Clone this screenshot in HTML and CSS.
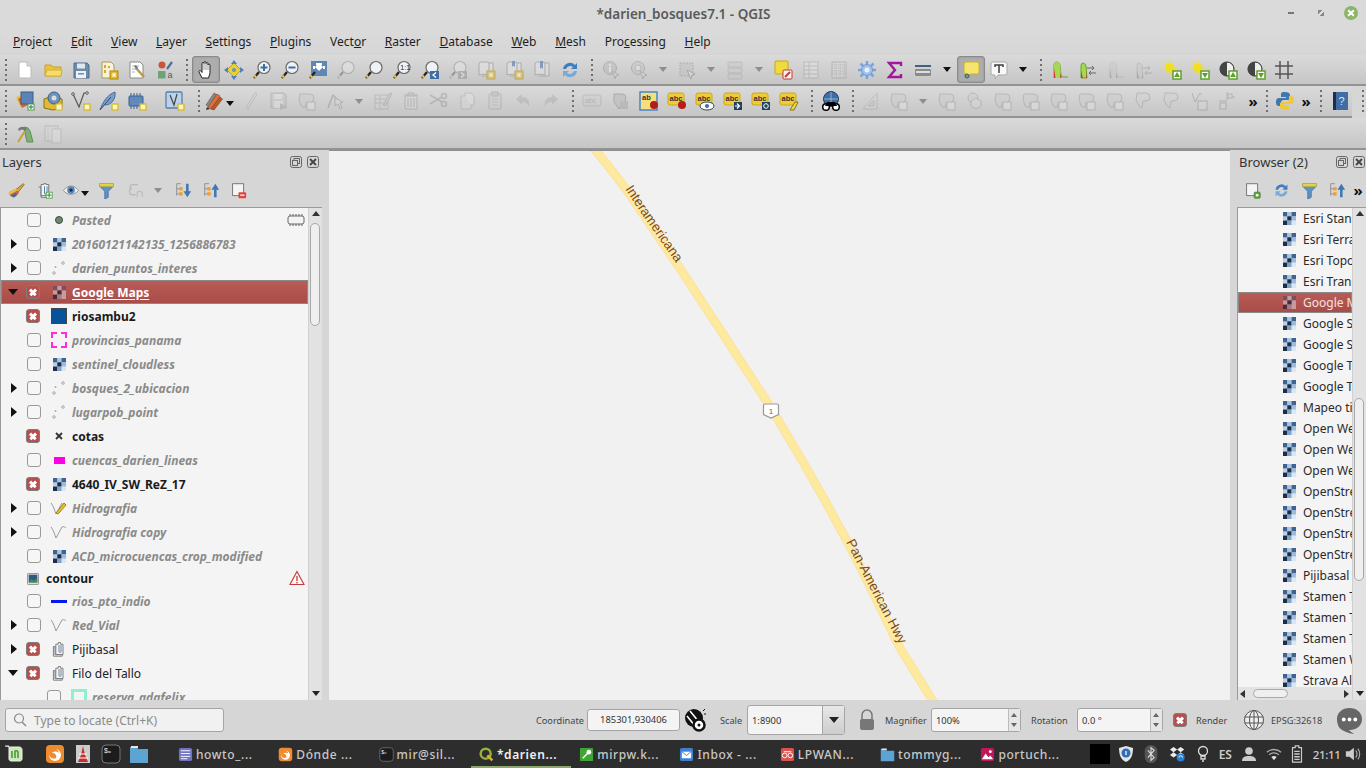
FILE: index.html
```html
<!DOCTYPE html>
<html lang="en">
<head>
<meta charset="utf-8">
<title>*darien_bosques7.1 - QGIS</title>
<link rel="stylesheet" href="styles.css">
</head>
<body>
<svg class="defs" width="0" height="0">
<defs>
<symbol id="new" viewBox="0 0 20 20"><path d="M4 2h8l4 4v12H4z" fill="#fff" stroke="#bbb"/><path d="M12 2v4h4" fill="#ddd" stroke="#bbb"/></symbol>
<symbol id="open" viewBox="0 0 20 20"><path d="M2 16V5h6l2 2h8v9z" fill="#e8c33f" stroke="#c9a227"/><path d="M2 16l2-6h15l-1 6z" fill="#f5dc6b" stroke="#d4b032"/></symbol>
<symbol id="save" viewBox="0 0 20 20"><path d="M3 3h13l2 2v13H3z" fill="#6d8cab" stroke="#4f6d8c"/><rect x="6" y="3.500" width="8" height="5" fill="#dfe7ef"/><rect x="5" y="11" width="10" height="7" fill="#eef2f6"/><rect x="7" y="13" width="6" height="1.500" fill="#6d8cab"/></symbol>
<symbol id="star" viewBox="0 0 20 20"><rect x="11" y="11" width="8" height="8" fill="#e3b81f" stroke="#b08c10"/><path d="M15 12.500v5M12.700 15h4.600M13.300 13.300l3.400 3.400M16.700 13.300l-3.400 3.400" stroke="#fff" stroke-width=".9"/></symbol>
<symbol id="saveas" viewBox="0 0 20 20"><path d="M3 2h9l3 3v13H3z" fill="#f6f1d8" stroke="#a89a5a"/><path d="M5 5h2v3H5zM5 10h2v3H5zM9 6h2v2H9z" fill="#dba82a"/><use href="#star"/></symbol>
<symbol id="props" viewBox="0 0 20 20"><path d="M3 2h10l3 3v13H3z" fill="#fff" stroke="#8a8a8a"/><path d="M5 6h7M5 9h5M5 12h3" stroke="#9db3cb"/><path d="M9 8l8 9" stroke="#b99a4a" stroke-width="2.500"/><path d="M9 5l2 3-2 1-2-3" fill="#777"/></symbol>
<symbol id="styles" viewBox="0 0 20 20"><circle cx="7" cy="5" r="3.500" fill="#c9553a"/><rect x="3" y="11" width="7.500" height="7.500" fill="#6da37a"/><path d="M12 9l5-7" stroke="#4a6f9f" stroke-width="2.200"/><text x="12.500" y="18" class="sv" font-size="9" fill="#555">a</text></symbol>
<symbol id="pan" viewBox="0 0 20 20"><path d="M6 18l-3-6c-.6-1.400 1-2 2-1l1 1.500V3.500c0-1.500 2-1.500 2 0V2.500c0-1.300 2-1.300 2 0v1c0-1.300 2-1.300 2 0v1.500c0-1.200 2-1.200 2 0v8l-1.500 5z" fill="#fff" stroke="#222" stroke-width="1"/><path d="M8 4v6M10 3v7M12 4v6" stroke="#555" stroke-width=".6"/></symbol>
<symbol id="pancenter" viewBox="0 0 20 20"><path d="M10 3l7 7-7 7-7-7z" fill="#e8d03a" stroke="#b9a21c"/><circle cx="10" cy="10" r="2" fill="#6f93b9"/><path d="M10 0l3 4H7zM10 20l3-4H7zM0 10l4-3v6zM20 10l-4-3v6z" fill="#4f82b8"/></symbol>
<symbol id="mag" viewBox="0 0 20 20"><path d="M7 12l-5 6" stroke="#222" stroke-width="2.200"/><path d="M2.500 17.500l1.500-2" stroke="#e8c33f" stroke-width="2.200"/><circle cx="12" cy="7.500" r="6" fill="#eef2f5" stroke="#6a6a6a" stroke-width="1.200"/></symbol>
<symbol id="zoomin" viewBox="0 0 20 20"><use href="#mag"/><path d="M12 4v7M8.500 7.500h7" stroke="#3f6ea5" stroke-width="2"/></symbol>
<symbol id="zoomout" viewBox="0 0 20 20"><use href="#mag"/><path d="M8.500 7.500h7" stroke="#3f6ea5" stroke-width="2"/></symbol>
<symbol id="zoomfull" viewBox="0 0 20 20"><rect x="3" y="1" width="16" height="15" fill="#5f87b3"/><path d="M11 3l4 4-4 4-4-4z" fill="#fff"/><path d="M8 3h6v2H8zM5 6h2v3H5zM15 6h2v3h-2z" fill="#fff"/><path d="M7 12l-5 6" stroke="#222" stroke-width="2.200"/><path d="M2.500 17.500l1.500-2" stroke="#e8c33f" stroke-width="2.200"/></symbol>
<symbol id="zoomlast" viewBox="0 0 20 20"><use href="#mag"/><rect x="10" y="11" width="9" height="8" fill="#3f6ea5"/><path d="M16 12.500L13 15l3 2.500" stroke="#fff" fill="none" stroke-width="1.300"/></symbol>
<symbol id="zoomnext" viewBox="0 0 20 20"><use href="#mag"/><rect x="10" y="11" width="9" height="8" fill="#3f6ea5"/><path d="M13 12.500l3 2.500-3 2.500" stroke="#fff" fill="none" stroke-width="1.300"/></symbol>
<symbol id="zoom11" viewBox="0 0 20 20"><use href="#mag"/><text x="8.300" y="10" class="sv" font-size="7" fill="#222">1:1</text></symbol>
<symbol id="map1" viewBox="0 0 20 20"><path d="M3 4c0-2 2-2 4-2 3 0 5 0 6 1v12c-2-1-7-1-10 0zM13 3h4v13H6" fill="#e4e4e4" stroke="#8a8a8a"/></symbol>
<symbol id="newmap" viewBox="0 0 20 20"><use href="#map1"/><use href="#star"/></symbol>
<symbol id="newmap2" viewBox="0 0 20 20"><use href="#map1"/><path d="M8 1h3v6l-1.500-1.500L8 7z" fill="#3f6ea5"/><use href="#star"/></symbol>
<symbol id="bookm" viewBox="0 0 20 20"><use href="#map1"/><path d="M8 1h3v8l-1.500-1.500L8 9z" fill="#3f6ea5"/></symbol>
<symbol id="refresh" viewBox="0 0 20 20"><path d="M3 9a7 7 0 0 1 12-4l2-2v6h-6l2-2a4.500 4.500 0 0 0-7 2z" fill="#3e7fc4"/><path d="M17 11a7 7 0 0 1-12 4l-2 2v-6h6l-2 2a4.500 4.500 0 0 0 7-2z" fill="#7aa9d8"/></symbol>
<symbol id="ident" viewBox="0 0 20 20"><circle cx="9" cy="8" r="6.500" fill="#9ab" stroke="#667"/><rect x="8" y="7" width="2" height="5" fill="#fff"/><rect x="8" y="4" width="2" height="2" fill="#fff"/><path d="M11 11l7 4-3 1-1 3z" fill="#ccc" stroke="#666"/></symbol>
<symbol id="selpt" viewBox="0 0 20 20"><circle cx="9" cy="8" r="6.500" fill="#bbb" stroke="#666"/><circle cx="9" cy="8" r="3" fill="#eee" stroke="#777"/><path d="M11 11l7 4-3 1-1 3z" fill="#ddd" stroke="#666"/></symbol>
<symbol id="selbox" viewBox="0 0 20 20"><rect x="3" y="3" width="13" height="13" fill="#b8b8a0" stroke="#666" stroke-dasharray="2 1"/><path d="M10 10l8 4-3 1-1 4z" fill="#eee" stroke="#555"/></symbol>
<symbol id="form" viewBox="0 0 20 20"><rect x="3" y="2" width="14" height="5" rx="1" fill="#c9c69a" stroke="#888"/><rect x="3" y="8" width="14" height="5" rx="1" fill="#c9c69a" stroke="#888"/><rect x="3" y="14" width="14" height="5" rx="1" fill="#c9c69a" stroke="#888"/></symbol>
<symbol id="desel" viewBox="0 0 20 20"><rect x="2" y="1" width="13" height="13" rx="1" fill="#f1da3e" stroke="#c4a71a"/><rect x="10" y="10" width="9" height="9" rx="1" fill="#f7f7f7" stroke="#c33"/><path d="M12 17l5-5" stroke="#c33" stroke-width="2"/></symbol>
<symbol id="table" viewBox="0 0 20 20"><rect x="3" y="2" width="14" height="16" fill="#eee" stroke="#888"/><path d="M3 6h14M3 10h14M3 14h14M8 2v16" stroke="#888"/></symbol>
<symbol id="table2" viewBox="0 0 20 20"><rect x="3" y="2" width="14" height="16" fill="#ddd" stroke="#777"/><path d="M3 5h14M3 8h14M3 11h14M3 14h14M7 2v16M11 2v16M15 2v16" stroke="#777" stroke-dasharray="1 1"/></symbol>
<symbol id="gear" viewBox="0 0 20 20"><path d="M10 1v18M1 10h18M3.500 3.500l13 13M16.500 3.500l-13 13" stroke="#7ba4dc" stroke-width="2.500"/><circle cx="10" cy="10" r="5.500" fill="#a3c2ea" stroke="#6c9ad6"/><circle cx="10" cy="10" r="2.500" fill="#e6effa"/></symbol>
<symbol id="sigma" viewBox="0 0 20 20"><path d="M16 6V3H4l6 7-6 7h12v-3" fill="none" stroke="#a016a0" stroke-width="2.400"/></symbol>
<symbol id="measure" viewBox="0 0 20 20"><rect x="2" y="5" width="16" height="2" fill="#3f6185"/><rect x="2" y="9" width="16" height="7" rx="1" fill="#8a8a8a"/><rect x="3" y="11" width="14" height="2" fill="#ddd"/></symbol>
<symbol id="tip" viewBox="0 0 20 20"><path d="M5 2h11q2 0 2 2v8q0 2-2 2H9l-3 4v-4H5q-2 0-2-2V4q0-2 2-2z" fill="#f5e46d" stroke="#c9b52e"/><circle cx="6" cy="16" r="2" fill="#6da37a" stroke="#456"/></symbol>
<symbol id="txt" viewBox="0 0 20 20"><path d="M4 2h12q2 0 2 2v9q0 2-2 2H9l-3 4v-4H4q-2 0-2-2V4q0-2 2-2z" fill="#f8f8f8" stroke="#aaa"/><path d="M6 7V5h8v2M10 5v8" stroke="#3f3f3f" stroke-width="1.500" fill="none"/></symbol>
<symbol id="hist" viewBox="0 0 20 20"><path d="M4 18V5q0-3 2.500-3T10 5l1 10q.5 2 2 2h5" fill="none" stroke="#6f9f3a"/><path d="M4 18V5q0-3 2.500-3T10 5l1 13z" fill="#a5d94f"/><path d="M4 18V8l1.500 10zM10 18l.5-6 1 6z" fill="#d33"/></symbol>
<symbol id="hist2" viewBox="0 0 20 20"><path d="M3 18V6q0-3 2-3t3 3l1 12z" fill="#a5d94f" stroke="#6f9f3a"/><path d="M3 18v-7l2 7zM8 18l.5-6 .5 6z" fill="#d33"/><path d="M9 8h7l-2-2M16 8l-2 2M18 13h-7l2-2M11 13l2 2" stroke="#666" fill="none"/></symbol>
<symbol id="sunup" viewBox="0 0 20 20"><circle cx="8" cy="8" r="4.500" fill="#f2df1d"/><path d="M8 0v16M0 8h16M2.500 2.500l11 11M13.500 2.500l-11 11" stroke="#f2df1d"/><rect x="11" y="11" width="8" height="8" fill="#fff" stroke="#5fa02c" stroke-width="1.500"/><path d="M15 12l3 5h-6z" fill="#5fa02c"/></symbol>
<symbol id="sundn" viewBox="0 0 20 20"><circle cx="8" cy="8" r="4.500" fill="#f2df1d"/><path d="M8 0v16M0 8h16M2.500 2.500l11 11M13.500 2.500l-11 11" stroke="#f2df1d"/><rect x="11" y="11" width="8" height="8" fill="#fff" stroke="#5fa02c" stroke-width="1.500"/><path d="M15 18l3-5h-6z" fill="#5fa02c"/></symbol>
<symbol id="conup" viewBox="0 0 20 20"><circle cx="9" cy="9" r="7" fill="#eee" stroke="#222"/><path d="M9 2a7 7 0 0 0 0 14z" fill="#444"/><rect x="11" y="11" width="8" height="8" fill="#fff" stroke="#5fa02c" stroke-width="1.500"/><path d="M15 12l3 5h-6z" fill="#5fa02c"/></symbol>
<symbol id="condn" viewBox="0 0 20 20"><circle cx="9" cy="9" r="7" fill="#eee" stroke="#222"/><path d="M9 2a7 7 0 0 0 0 14z" fill="#444"/><rect x="11" y="11" width="8" height="8" fill="#fff" stroke="#5fa02c" stroke-width="1.500"/><path d="M15 18l3-5h-6z" fill="#5fa02c"/></symbol>
<symbol id="grid" viewBox="0 0 20 20"><path d="M6 1v18M14 1v18M1 6h18M1 14h18" stroke="#555" stroke-width="1.500"/></symbol>
<symbol id="addl" viewBox="0 0 20 20"><path d="M1 6l8-3 4 10-8 3z" fill="#e8c33f"/><path d="M3 8l7-4 5 9-8 4z" fill="#d9603f"/><rect x="6" y="1" width="12" height="12" fill="#5b83b5" stroke="#3b5f8c"/><rect x="13" y="13" width="6" height="6" fill="#fff" stroke="#4a9a4a"/><path d="M16 14v4M14 16h4" stroke="#4a9a4a" stroke-width="1.300"/></symbol>
<symbol id="db" viewBox="0 0 20 20"><path d="M1 8l9-3 9 3v9l-9 2-9-2z" fill="#e0bb33" stroke="#8a7216"/><circle cx="11" cy="7" r="6" fill="#6d93bc" stroke="#3b5f8c"/><circle cx="11" cy="7" r="2.500" fill="#ddd"/><rect x="13" y="13" width="6" height="6" fill="#fdf5c0" stroke="#d6b928"/></symbol>
<symbol id="vec" viewBox="0 0 20 20"><path d="M2 3l6 13 5-14h3" fill="none" stroke="#555" stroke-width="1.200"/><circle cx="2" cy="3" r="1.300" fill="#fff" stroke="#555"/><circle cx="16" cy="2" r="1.300" fill="#fff" stroke="#555"/><rect x="13" y="13" width="6" height="6" fill="#fdf5c0" stroke="#d6b928" stroke-width="1.300"/></symbol>
<symbol id="feather" viewBox="0 0 20 20"><path d="M1 19C4 11 8 4 16 1c1 6-3 13-10 13" fill="#7c9fc6" stroke="#44689a"/><path d="M1 19L12 6" stroke="#2f4f7c"/><rect x="13" y="13" width="6" height="6" fill="#fdf5c0" stroke="#d6b928" stroke-width="1.300"/></symbol>
<symbol id="chip" viewBox="0 0 20 20"><rect x="2" y="5" width="14" height="10" rx="1" fill="#5f8abb" stroke="#3a618f"/><path d="M4 2v3M7 2v3M10 2v3M13 2v3M4 15v3M7 15v3M10 15v3" stroke="#3a618f"/><rect x="13" y="13" width="6" height="6" fill="#fdf5c0" stroke="#d6b928" stroke-width="1.300"/></symbol>
<symbol id="vmesh" viewBox="0 0 20 20"><rect x="1" y="1" width="16" height="16" rx="1" fill="#bcd2e8" stroke="#5580ad" stroke-width="1.300"/><path d="M5 4l4 10 3-11" fill="none" stroke="#444" stroke-width="1.200"/><rect x="13" y="13" width="6" height="6" fill="#fdf5c0" stroke="#d6b928" stroke-width="1.300"/></symbol>
<symbol id="pencil" viewBox="0 0 20 20"><path d="M1 14L9 2l2.500 1.500L4 16z" fill="#888" stroke="#555" stroke-width=".6"/><path d="M3 16L12 3l3 2L6 18z" fill="#e0703a" stroke="#8a4220" stroke-width=".6"/><path d="M6 18l9-12 2.500 2L9 19z" fill="#b95a2a" stroke="#7a3a1c" stroke-width=".6"/><path d="M2 16l-1 3 4-1z" fill="#333"/></symbol>
<symbol id="pen1" viewBox="0 0 20 20"><path d="M5 17L14 2l2 1L7 18z" fill="#ddd" stroke="#888"/></symbol>
<symbol id="saveed" viewBox="0 0 20 20"><path d="M2 2h13l2 2v13H2z" fill="#bbb" stroke="#777"/><rect x="5" y="3" width="8" height="5" fill="#eee"/><rect x="5" y="10" width="9" height="7" fill="#eee"/><path d="M11 12l7 4-7 3z" fill="#888"/></symbol>
<symbol id="blob" viewBox="0 0 20 20"><path d="M3 3h10q4 0 4 4t-4 5H9l-1 5-4-2-2-7z" fill="#c9c9c9" stroke="#777"/><rect x="10" y="11" width="8" height="8" fill="#eee" stroke="#777"/></symbol>
<symbol id="blob2" viewBox="0 0 20 20"><path d="M4 2h9q4 0 4 4t-4 4h-3l-1 7-3-2-3-6z" fill="#d0d0d0" stroke="#777"/></symbol>
<symbol id="hexb" viewBox="0 0 20 20"><circle cx="8" cy="7" r="5" fill="#ccc" stroke="#777"/><path d="M11 7l5 3v5l-5 3-5-3v-5z" fill="#ddd" stroke="#777"/></symbol>
<symbol id="vtx" viewBox="0 0 20 20"><path d="M3 17L8 4l5 5" fill="none" stroke="#666" stroke-width="1.500"/><path d="M10 7l8 4-3 1 2 5-2 1-2-5-3 2z" fill="#ddd" stroke="#666"/></symbol>
<symbol id="edt" viewBox="0 0 20 20"><rect x="2" y="4" width="13" height="14" fill="#d8d4b0" stroke="#888"/><path d="M2 8h13M2 12h13M7 4v14" stroke="#888"/><path d="M10 14L17 2l2 1-7 12z" fill="#bbb" stroke="#777"/></symbol>
<symbol id="trash" viewBox="0 0 20 20"><path d="M3 4h14M7 4V2h6v2" stroke="#a55" fill="none"/><path d="M4 5h12v13H4z" fill="#ddd" stroke="#966"/><path d="M7 7v9M10 7v9M13 7v9" stroke="#966"/></symbol>
<symbol id="cut" viewBox="0 0 20 20"><path d="M1 4l12 7M1 13l12-7" stroke="#777" stroke-width="1.500"/><circle cx="15" cy="5" r="2.500" fill="none" stroke="#777" stroke-width="1.500"/><circle cx="15" cy="13" r="2.500" fill="none" stroke="#777" stroke-width="1.500"/></symbol>
<symbol id="copy" viewBox="0 0 20 20"><path d="M4 5h7l3 3v10H4z" fill="#ddd" stroke="#888"/><path d="M8 5V2h6l3 3v9h-3" fill="#eee" stroke="#888"/></symbol>
<symbol id="paste" viewBox="0 0 20 20"><rect x="4" y="3" width="12" height="15" rx="1" fill="#ccc" stroke="#777"/><rect x="7" y="1" width="6" height="4" fill="#aaa" stroke="#777"/><path d="M7 8h6M7 11h6M7 14h6" stroke="#999"/></symbol>
<symbol id="undo" viewBox="0 0 20 20"><path d="M3 8l6-5v3c5 0 8 3 7 10-2-4-3-5-7-5v3z" fill="#999"/></symbol>
<symbol id="redo" viewBox="0 0 20 20"><path d="M17 8l-6-5v3c-5 0-8 3-7 10 2-4 3-5 7-5v3z" fill="#999"/></symbol>
<symbol id="lbl" viewBox="0 0 20 20"><rect x="1" y="4" width="18" height="11" rx="2" fill="#ccc" stroke="#888"/><text x="3" y="12" class="sv" font-size="7" fill="#666">abc</text></symbol>
<symbol id="lblpin" viewBox="0 0 20 20"><path d="M3 3h8q4 0 4 4t-4 5l-3 6-5-7z" fill="#bbb" stroke="#888"/><rect x="9" y="10" width="8" height="8" fill="#aaa"/></symbol>
<symbol id="abc" viewBox="0 0 20 20"><path d="M3 2h12q2 0 2 2v8q0 2-2 2H3q-2 0-2-2V4q0-2 2-2z" fill="#eecb3a" stroke="#c9a91f"/><text x="2.500" y="10" class="sv" font-size="7.500" font-weight="700" fill="#333">abc</text></symbol>
<symbol id="abcb" viewBox="0 0 20 20"><rect x="1" y="1" width="17" height="18" fill="#f4df7a" stroke="#3f7fd0" stroke-width="1.400"/><text x="3" y="9" class="sv" font-size="7.500" font-weight="700" fill="#333">ab</text><circle cx="15" cy="14" r="4" fill="#b51c1c"/></symbol>
<symbol id="abcr" viewBox="0 0 20 20"><use href="#abc"/><circle cx="15" cy="14" r="4" fill="#b51c1c"/></symbol>
<symbol id="abce" viewBox="0 0 20 20"><use href="#abc"/><ellipse cx="12" cy="15" rx="7" ry="4" fill="#fff" stroke="#345"/><circle cx="12" cy="15" r="2" fill="#3f6ea5"/></symbol>
<symbol id="abca" viewBox="0 0 20 20"><use href="#abc"/><rect x="11" y="11" width="8" height="8" fill="#23405f"/><path d="M12 15h4M14 12.500l2.500 2.500-2.500 2.500" stroke="#fff" fill="none" stroke-width="1.200"/></symbol>
<symbol id="abcs" viewBox="0 0 20 20"><use href="#abc"/><rect x="11" y="11" width="8" height="8" fill="#23405f"/><circle cx="15" cy="15" r="2.300" fill="none" stroke="#fff"/></symbol>
<symbol id="abcp" viewBox="0 0 20 20"><use href="#abc"/><path d="M11 19l5-8h3l-4 8z" fill="#f1da3e" stroke="#8a7216"/></symbol>
<symbol id="bino" viewBox="0 0 20 20"><circle cx="10" cy="8" r="7.500" fill="#3f6ea5" stroke="#23405f"/><path d="M10 1v14M3 8h14" stroke="#a8c4e0" stroke-width=".8"/><circle cx="5" cy="16" r="3.300" fill="#fff" stroke="#000" stroke-width="1.500"/><circle cx="15" cy="16" r="3.300" fill="#fff" stroke="#000" stroke-width="1.500"/><path d="M6 11h8l2 4H4z" fill="#000"/></symbol>
<symbol id="ruler" viewBox="0 0 20 20"><path d="M2 18L16 2v16z" fill="#e2dcc0" stroke="#888"/><path d="M7 15l6-6v6z" fill="#bbb" stroke="#888"/></symbol>
<symbol id="vtxq" viewBox="0 0 20 20"><path d="M3 2l3 9 5-9 2 2" fill="none" stroke="#666"/><rect x="9" y="10" width="9" height="9" fill="#ddd" stroke="#666"/></symbol>
<symbol id="split" viewBox="0 0 20 20"><path d="M10 1v8M2 10h8M13 6h5" stroke="#666"/><rect x="3" y="12" width="6" height="6" fill="#ddd" stroke="#666"/><rect x="11" y="3" width="4" height="4" fill="#ddd" stroke="#666"/></symbol>
<symbol id="python" viewBox="0 0 20 20"><path d="M10 1c-4 0-4 1-4 3v2h5v1H4c-2 0-3 1-3 4s1 4 3 4h2v-3c0-2 1-3 3-3h4c1.500 0 2-1 2-2V4c0-2-2-3-5-3z" fill="#3e78ad"/><path d="M10 19c4 0 4-1 4-3v-2H9v-1h7c2 0 3-1 3-4s-1-4-3-4h-2v3c0 2-1 3-3 3H7c-1.500 0-2 1-2 2v3c0 2 2 3 5 3z" fill="#f0c83a"/></symbol>
<symbol id="help" viewBox="0 0 20 20"><rect x="3" y="1" width="15" height="18" fill="#3f6ea5"/><rect x="3" y="1" width="3" height="18" fill="#1f2f45"/><text x="8.500" y="14" class="sv" font-size="11" fill="#dfe9f5">?</text></symbol>
<symbol id="digit" viewBox="0 0 20 20"><path d="M9 3l4 1 2 3 3 11h-6l-2-9z" fill="#7fae7a" stroke="#5f8f55"/><path d="M3 18L10 7" stroke="#c9a227" stroke-width="2"/><path d="M3 5c3-3 6-3 9 0l-2 2c-2-2-4-2-6 0z" fill="#777"/></symbol>
<symbol id="pages" viewBox="0 0 20 20"><rect x="2" y="2" width="13" height="15" fill="#ddd" stroke="#888"/><path d="M5 2v15M12 2v15" stroke="#888" stroke-dasharray="1 1"/><rect x="9" y="5" width="9" height="14" fill="#e8e8e8" stroke="#999"/></symbol>
<symbol id="brush" viewBox="0 0 20 20"><path d="M9 9l9-7 1 1-7 9z" fill="#d9a93a" stroke="#8f6a1a"/><path d="M1 12l8-4 4 5-5 5c-3 1-7-3-7-6z" fill="#d9603f"/><path d="M1 12l8-4 2 2-9 5z" fill="#e8c33f"/><path d="M3 16l6-3 2 2-4 3z" fill="#3f6ea5"/></symbol>
<symbol id="group" viewBox="0 0 20 20"><path d="M3 6h3v12h9v-2" fill="#eee" stroke="#666"/><path d="M6 3h3v-1h3v1h3v13H6z" fill="#f4f4f4" stroke="#666"/><path d="M10 5v8a1.500 1.500 0 0 0 3 0V5" fill="none" stroke="#3f6ea5"/><rect x="12" y="12" width="7" height="7" fill="#fff" stroke="#4a9a4a"/><path d="M15.500 13v5M13 15.500h5" stroke="#4a9a4a" stroke-width="1.500"/></symbol>
<symbol id="groupg" viewBox="0 0 20 20"><path d="M3 7h2v10h9v2H3z" fill="#f0f0f0" stroke="#666"/><path d="M6 4h3V2h3v2h3v13H6z" fill="#f4f4f4" stroke="#666"/><path d="M10 5v8a1.200 1.200 0 0 0 2.500 0V5" fill="none" stroke="#3f6ea5"/></symbol>
<symbol id="eye" viewBox="0 0 20 20"><path d="M1 10c5-7 13-7 18 0-5 6-13 6-18 0z" fill="#eee" stroke="#888"/><circle cx="10" cy="9.500" r="4.500" fill="#5588bb"/><circle cx="10" cy="9.500" r="2" fill="#1f2f45"/></symbol>
<symbol id="funnel" viewBox="0 0 20 20"><path d="M2 2h16v3l-6 6v7l-4 2v-9L2 5z" fill="#5f94c6" stroke="#3f6ea5"/><path d="M2 2h16v3H2z" fill="#f0d84a" stroke="#c9b52e"/></symbol>
<symbol id="eps" viewBox="0 0 20 20"><path d="M13 3H6c-3 0-3 5 0 5H5c-3 0-3 7 1 7h4" fill="none" stroke="#777" stroke-width="1.500"/><path d="M12 18v-5q0-2 3-2t3 2v5" fill="none" stroke="#888" stroke-width="1.500"/></symbol>
<symbol id="expd" viewBox="0 0 20 20"><path d="M2 2h5M2 8h5M2 14h5M2 2v14" stroke="#888" fill="none"/><rect x="5" y="6" width="4" height="4" fill="#f0a030"/><rect x="5" y="12" width="4" height="4" fill="#f0a030"/><path d="M13 2h3v9h3l-4.500 7L10 11h3z" fill="#3f78b5"/></symbol>
<symbol id="coll" viewBox="0 0 20 20"><path d="M2 2h5M2 8h5M2 14h5M2 2v14" stroke="#888" fill="none"/><rect x="5" y="6" width="4" height="4" fill="#f0a030"/><rect x="5" y="12" width="4" height="4" fill="#f0a030"/><path d="M13 18h3V9h3l-4.500-7L10 9h3z" fill="#3f78b5"/></symbol>
<symbol id="rmv" viewBox="0 0 20 20"><path d="M3 2h13v14H3z" fill="#f4f4f4" stroke="#666"/><rect x="10" y="12" width="9" height="7" rx="1" fill="#e0443e"/><path d="M12 15.500h5" stroke="#fff" stroke-width="1.500"/></symbol>
<symbol id="addgr" viewBox="0 0 20 20"><path d="M3 2h13v14H3z" fill="#f4f4f4" stroke="#666"/><rect x="12" y="12" width="7" height="7" rx="1" fill="#6aa84f" stroke="#3f7f30"/><circle cx="15.500" cy="15.500" r="1.500" fill="#fff"/></symbol>
<symbol id="ras" viewBox="0 0 13 13"><rect width="13" height="13" fill="#b9d0e8"/><rect width="4.300" height="4.300" fill="#3e6390"/><rect x="4.300" width="4.300" height="4.300" fill="#a9c5e1"/><rect x="8.600" width="4.400" height="4.300" fill="#3e6390"/><rect x="4.300" y="4.300" width="4.300" height="4.300" fill="#1e2d44"/><rect x="8.600" y="4.300" width="4.400" height="4.300" fill="#9dbbd9"/><rect y="8.600" width="4.300" height="4.400" fill="#1e2d44"/><rect x="4.300" y="8.600" width="4.300" height="4.400" fill="#7fa2c8"/><rect x="8.600" y="8.600" width="4.400" height="4.400" fill="#dbe7f2"/></symbol>
<symbol id="rass" viewBox="0 0 13 13"><rect width="13" height="13" fill="#c79a9c"/><rect width="4.300" height="4.300" fill="#7a4f63"/><rect x="8.600" width="4.400" height="4.300" fill="#7a4f63"/><rect x="4.300" y="4.300" width="4.300" height="4.300" fill="#4a2a35"/><rect y="8.600" width="4.300" height="4.400" fill="#4a2a35"/><rect x="4.300" y="8.600" width="4.300" height="4.400" fill="#a87a88"/></symbol>
<symbol id="pts" viewBox="0 0 14 14"><circle cx="2" cy="12" r="1.300" fill="none" stroke="#999" stroke-width=".8"/><circle cx="3.500" cy="6" r="1" fill="#aaa"/><circle cx="11" cy="2" r="1.300" fill="none" stroke="#999" stroke-width=".8"/></symbol>
<symbol id="lin" viewBox="0 0 18 14"><path d="M1 2c2 2 4 8 5 11L12 2c2-1 3 0 4 1" fill="none" stroke="#999"/></symbol>
<symbol id="penl" viewBox="0 0 18 14"><path d="M1 2c2 2 4 8 5 11L12 2" fill="none" stroke="#999"/><path d="M6 12l8-10 2 2-8 9z" fill="#ecc32f" stroke="#9c8216"/></symbol>
<symbol id="warn" viewBox="0 0 16 16"><path d="M8 1.500L15 14.500H1z" fill="#fdf6f6" stroke="#c43b3b" stroke-width="1.100"/><path d="M8 6v5M8 12v1.500" stroke="#c43b3b" stroke-width="1.300"/></symbol>
<symbol id="img" viewBox="0 0 14 14"><rect x=".5" y=".5" width="13" height="13" rx="1" fill="#ddd" stroke="#888"/><rect x="2" y="2" width="10" height="9" fill="#2a5a8a"/><path d="M2 11l3-4 3 2 4-3v5z" fill="#4a8a4a"/></symbol>
<symbol id="memo" viewBox="0 0 18 14"><rect x="1" y="3" width="16" height="8" rx="2" fill="#f4f4f4" stroke="#666"/><path d="M3 1v2M6 1v2M9 1v2M12 1v2M15 1v2M3 11v2M6 11v2M9 11v2M12 11v2M15 11v2" stroke="#666"/></symbol>
<symbol id="float" viewBox="0 0 12 12"><rect x=".5" y=".5" width="11" height="11" rx="2" fill="none" stroke="#666"/><rect x="4" y="2.500" width="5.500" height="5" fill="none" stroke="#666"/><rect x="2.500" y="4.500" width="5" height="5" fill="#d6d6d6" stroke="#666"/></symbol>
<symbol id="close" viewBox="0 0 12 12"><rect x=".5" y=".5" width="11" height="11" rx="2" fill="none" stroke="#666"/><path d="M3 3l6 6M9 3l-6 6" stroke="#444" stroke-width="1.800"/></symbol>
<symbol id="search" viewBox="0 0 14 14"><circle cx="6" cy="5.500" r="4.500" fill="none" stroke="#888" stroke-width="1.200"/><path d="M9 9l4 4" stroke="#888" stroke-width="1.500"/></symbol>
<symbol id="nogeo" viewBox="0 0 24 24"><circle cx="11" cy="10" r="9" fill="#111"/><path d="M7 3l9 11M4 8l8 10" stroke="#fff" stroke-width="1.600"/><circle cx="16" cy="17" r="5.500" fill="#fff" stroke="#111" stroke-width="2.500"/><circle cx="16" cy="17" r="1.500" fill="#111"/><path d="M20 3l2-2M21 6h2" stroke="#111"/></symbol>
<symbol id="lock" viewBox="0 0 16 22"><path d="M3 11V6a5 5 0 0 1 10 0v5" fill="none" stroke="#777" stroke-width="1.500"/><rect x="1" y="10" width="14" height="11" rx="2" fill="#777"/></symbol>
<symbol id="globe" viewBox="0 0 22 22"><circle cx="11" cy="11" r="9.500" fill="#eee" stroke="#555"/><ellipse cx="11" cy="11" rx="4.500" ry="9.500" fill="none" stroke="#555"/><path d="M1.500 8h19M1.500 14h19M11 1.500v19" stroke="#555"/></symbol>
<symbol id="msg" viewBox="0 0 28 28"><path d="M14 1c7.500 0 13 5 13 11.500S21.500 24 14 24l-1 0 6 4c-7-1-12-3-15-6C2 20 1 16 1 12.500 1 6 6.500 1 14 1z" fill="#666"/><circle cx="8" cy="13" r="2" fill="#fff"/><circle cx="14" cy="13" r="2" fill="#fff"/><circle cx="20" cy="13" r="2" fill="#fff"/></symbol>
<symbol id="mint" viewBox="0 0 20 20"><path d="M1 2h4v13c0 1 1 2 2 2h9c1 0 2-1 2-2V6c0-2-1-3-3-3H6" fill="#cfe8b8" stroke="#eee"/><path d="M8 14V7m3 7V7q3-1 3 2v5" stroke="#4b9a3c" stroke-width="1.600" fill="none"/></symbol>
<symbol id="fox" viewBox="0 0 20 20"><rect x="1" y="1" width="18" height="18" rx="4" fill="#ef8a2f"/><circle cx="10" cy="11" r="6" fill="#fff"/><path d="M5 5c4-2 8 0 9 4-2-2-5-2-7 0 3 0 5 2 4 5-3 2-7-1-7-4z" fill="#ef8a2f"/></symbol>
<symbol id="tool" viewBox="0 0 20 20"><rect x="3" y="1" width="14" height="18" fill="#ccc"/><path d="M10 2l2 9 3 7H5l3-7z" fill="#c82c2c"/><path d="M6 10h8M5 14h10" stroke="#fff"/></symbol>
<symbol id="term" viewBox="0 0 20 20"><rect x="1" y="1" width="18" height="18" rx="4" fill="#1c1c1c" stroke="#777"/><text x="3" y="9" class="sv" font-size="7" fill="#eee">$</text><path d="M7 8h3" stroke="#eee"/></symbol>
<symbol id="folder" viewBox="0 0 20 20"><path d="M1 3h7l1 2h10v14H1z" fill="#5ea4d2"/><path d="M2 2h7v2H2z" fill="#e6e6e6"/></symbol>
<symbol id="doc" viewBox="0 0 16 16"><rect x="1" y="1" width="14" height="14" rx="2" fill="#7272c4"/><path d="M3 4h10M3 7h10M3 10h10M3 12.500h7" stroke="#fff"/></symbol>
<symbol id="qgis" viewBox="0 0 18 18"><circle cx="8" cy="8" r="6" fill="none" stroke="#93b23b" stroke-width="3"/><path d="M10 10l6 6" stroke="#e3ae2a" stroke-width="3"/></symbol>
<symbol id="kee" viewBox="0 0 16 16"><rect x="1" y="1" width="14" height="14" rx="1" fill="#3fa535"/><circle cx="10.500" cy="5.500" r="2.500" fill="#fff"/><path d="M9 7l-5 5" stroke="#fff" stroke-width="1.500"/></symbol>
<symbol id="mail" viewBox="0 0 16 16"><rect x="1" y="1" width="14" height="14" rx="2" fill="#3f7fd0"/><rect x="3" y="5" width="10" height="7" fill="#fff"/><path d="M3 5l5 4 5-4" fill="none" stroke="#3f7fd0"/></symbol>
<symbol id="lp" viewBox="0 0 16 16"><rect x="1" y="1" width="14" height="14" rx="2" fill="#d9534f"/><circle cx="5" cy="9" r="2.500" fill="none" stroke="#fff"/><circle cx="11" cy="9" r="2.500" fill="none" stroke="#fff"/><path d="M4 5h8" stroke="#fff"/></symbol>
<symbol id="pic" viewBox="0 0 16 16"><rect x="1" y="1" width="14" height="14" rx="2" fill="#c2185b"/><path d="M2 13l4-6 3 4 2-2 3 4z" fill="#fff"/><circle cx="11" cy="5" r="1.500" fill="#fff"/></symbol>
<symbol id="shield" viewBox="0 0 16 18"><path d="M8 1l7 2c0 7-2 12-7 14C3 15 1 10 1 3z" fill="#e4e4e4"/><circle cx="8" cy="8" r="4.500" fill="#2c6fb5"/><path d="M8 6v4" stroke="#fff" stroke-width="1.300"/></symbol>
<symbol id="bt" viewBox="0 0 14 20"><rect width="14" height="20" rx="7" fill="#555"/><path d="M3.500 6l7 8-3.500 3V3l3.500 3-7 8" fill="none" stroke="#ddd" stroke-width="1.200"/></symbol>
<symbol id="dbx" viewBox="0 0 18 18"><path d="M4 1l4 3-4 3-4-3zM12 1l4 3-4 3-4-3zM4 7l4 3-4 3-4-3zM12 7l4 3-4 3-4-3z" fill="#eee"/><circle cx="12" cy="13" r="4.500" fill="#2a7fd0"/><path d="M10 13a2 2 0 0 1 4 0" stroke="#fff" fill="none"/></symbol>
<symbol id="bulb" viewBox="0 0 12 18"><circle cx="6" cy="6" r="4.500" fill="none" stroke="#ddd" stroke-width="1.300"/><path d="M4 11h4v3H4zM5 16h2" stroke="#ddd" fill="none" stroke-width="1.300"/></symbol>
<symbol id="user" viewBox="0 0 16 16"><circle cx="8" cy="5" r="3.800" fill="#ccc"/><path d="M1 15c0-4 3-5 7-5s7 1 7 5z" fill="#ccc"/></symbol>
<symbol id="wifi" viewBox="0 0 18 14"><path d="M1 5a12 12 0 0 1 16 0M3.500 8a8 8 0 0 1 11 0" fill="none" stroke="#aaa" stroke-width="1.500"/><path d="M6 10.500a4 4 0 0 1 6 0L9 14z" fill="#ddd"/></symbol>
<symbol id="batt" viewBox="0 0 12 20"><path d="M4 1h4v2h3v16H1V3h3z" fill="none" stroke="#ccc" stroke-width="1.300"/><path d="M3 7h6M3 10h6M3 13h6M3 16h6" stroke="#ccc" stroke-width="1.500"/></symbol>
<symbol id="vol" viewBox="0 0 18 16"><path d="M1 5h4l5-4v14l-5-4H1z" fill="#ccc"/><path d="M12 4q3 4 0 8M14.500 2q4 6 0 12" fill="none" stroke="#aaa" stroke-width="1.300"/></symbol>
</defs>
</svg>

<div class="app">
<header class="titlebar">
  <span class="title">*darien_bosques7.1 - QGIS</span>
  <span class="wbtns"><i class="wmin"></i><i class="wmax"></i><i class="wclose"></i></span>
</header>
<nav class="menubar">
  <span><u>P</u>roject</span><span><u>E</u>dit</span><span><u>V</u>iew</span><span><u>L</u>ayer</span><span><u>S</u>ettings</span><span><u>P</u>lugins</span><span>Vect<u>o</u>r</span><span><u>R</u>aster</span><span><u>D</u>atabase</span><span><u>W</u>eb</span><span><u>M</u>esh</span><span>Pro<u>c</u>essing</span><span><u>H</u>elp</span>
</nav>

<div class="tb tb1">
  <i class="grip first"></i>
  <b class="bt"><svg><use href="#new"/></svg></b><b class="bt"><svg><use href="#open"/></svg></b><b class="bt"><svg><use href="#save"/></svg></b><b class="bt"><svg><use href="#saveas"/></svg></b><b class="bt"><svg><use href="#props"/></svg></b><b class="bt"><svg><use href="#styles"/></svg></b>
  <i class="grip"></i>
  <b class="bt on"><svg><use href="#pan"/></svg></b><b class="bt"><svg><use href="#pancenter"/></svg></b><b class="bt"><svg><use href="#zoomin"/></svg></b><b class="bt"><svg><use href="#zoomout"/></svg></b><b class="bt"><svg><use href="#zoomfull"/></svg></b><b class="bt d"><svg><use href="#mag"/></svg></b><b class="bt"><svg><use href="#mag"/></svg></b><b class="bt"><svg><use href="#zoom11"/></svg></b><b class="bt"><svg><use href="#zoomlast"/></svg></b><b class="bt d"><svg><use href="#zoomnext"/></svg></b><b class="bt f"><svg><use href="#newmap"/></svg></b><b class="bt f"><svg><use href="#newmap2"/></svg></b><b class="bt f"><svg><use href="#bookm"/></svg></b><b class="bt"><svg><use href="#refresh"/></svg></b>
  <i class="grip"></i>
  <b class="bt d"><svg><use href="#ident"/></svg></b><b class="bt d"><svg><use href="#selpt"/></svg></b><b class="ar g"></b><b class="bt d"><svg><use href="#selbox"/></svg></b><b class="ar g"></b><b class="bt d"><svg><use href="#form"/></svg></b><b class="ar g"></b><b class="bt"><svg><use href="#desel"/></svg></b><b class="bt d"><svg><use href="#table"/></svg></b><b class="bt d"><svg><use href="#table2"/></svg></b><b class="bt"><svg><use href="#gear"/></svg></b><b class="bt"><svg><use href="#sigma"/></svg></b><b class="bt"><svg><use href="#measure"/></svg></b><b class="ar"></b><b class="bt on"><svg><use href="#tip"/></svg></b><b class="bt"><svg><use href="#txt"/></svg></b><b class="ar"></b>
  <i class="grip"></i>
  <b class="bt"><svg><use href="#hist"/></svg></b><b class="bt"><svg><use href="#hist2"/></svg></b><b class="bt d"><svg><use href="#hist"/></svg></b><b class="bt d"><svg><use href="#hist2"/></svg></b><b class="bt"><svg><use href="#sunup"/></svg></b><b class="bt"><svg><use href="#sundn"/></svg></b><b class="bt"><svg><use href="#conup"/></svg></b><b class="bt"><svg><use href="#condn"/></svg></b><b class="bt"><svg><use href="#grid"/></svg></b>
</div>

<div class="tb tb2">
  <i class="grip first"></i>
  <b class="bt"><svg><use href="#addl"/></svg></b><b class="bt"><svg><use href="#db"/></svg></b><b class="bt"><svg><use href="#vec"/></svg></b><b class="bt"><svg><use href="#feather"/></svg></b><b class="bt"><svg><use href="#chip"/></svg></b><b class="gap10"></b><b class="bt"><svg><use href="#vmesh"/></svg></b>
  <i class="grip s9"></i>
  <b class="bt wide"><svg><use href="#pencil"/></svg><em class="mini"></em></b>
  <b class="bt d"><svg><use href="#pen1"/></svg></b><b class="bt d"><svg><use href="#saveed"/></svg></b><b class="bt d"><svg><use href="#blob"/></svg></b><b class="bt d"><svg><use href="#vtx"/></svg></b><b class="ar g"></b><b class="bt d"><svg><use href="#edt"/></svg></b><b class="bt d"><svg><use href="#trash"/></svg></b><b class="bt d"><svg><use href="#cut"/></svg></b><b class="bt d"><svg><use href="#copy"/></svg></b><b class="bt d"><svg><use href="#paste"/></svg></b><b class="bt d"><svg><use href="#undo"/></svg></b><b class="bt d"><svg><use href="#redo"/></svg></b>
  <i class="grip"></i>
  <b class="bt d"><svg><use href="#lbl"/></svg></b><b class="bt f l1"><svg><use href="#lblpin"/></svg></b><b class="bt"><svg><use href="#abcb"/></svg></b><b class="bt"><svg><use href="#abcr"/></svg></b><b class="bt"><svg><use href="#abce"/></svg></b><b class="bt"><svg><use href="#abca"/></svg></b><b class="bt"><svg><use href="#abcs"/></svg></b><b class="bt"><svg><use href="#abcp"/></svg></b>
  <i class="grip s8"></i>
  <b class="bt"><svg><use href="#bino"/></svg></b>
  <i class="grip s7"></i>
  <b class="bt d"><svg><use href="#ruler"/></svg></b><b class="bt d"><svg><use href="#blob"/></svg></b><b class="ar g"></b><b class="bt d"><svg><use href="#blob"/></svg></b><b class="bt d"><svg><use href="#hexb"/></svg></b><b class="bt d"><svg><use href="#blob"/></svg></b><b class="bt d"><svg><use href="#blob"/></svg></b><b class="bt d"><svg><use href="#blob"/></svg></b><b class="bt d"><svg><use href="#blob"/></svg></b><b class="bt d"><svg><use href="#blob"/></svg></b><b class="bt d"><svg><use href="#blob2"/></svg></b><b class="bt d"><svg><use href="#blob2"/></svg></b><b class="bt d"><svg><use href="#vtxq"/></svg></b><b class="bt d"><svg><use href="#split"/></svg></b>
  <b class="more w24">»</b>
  <i class="grip s1"></i>
  <b class="bt"><svg><use href="#python"/></svg></b><b class="more w14">»</b>
  <i class="grip"></i>
  <b class="bt"><svg><use href="#help"/></svg></b>
  <i class="grip s8"></i>
</div>

<div class="tb tb3">
  <i class="grip first"></i>
  <b class="bt"><svg><use href="#digit"/></svg></b><b class="bt d"><svg><use href="#pages"/></svg></b>
</div>

<main class="main">
  <section class="panel left">
    <div class="phead"><span>Layers</span><span class="dock"><svg class="dk"><use href="#float"/></svg><svg class="dk"><use href="#close"/></svg></span></div>
    <div class="ptools lt">
      <b class="pt p1"><svg><use href="#brush"/></svg></b><b class="pt p2"><svg><use href="#group"/></svg></b><b class="pt p3"><svg><use href="#eye"/></svg><em class="mini"></em></b><b class="pt p4"><svg><use href="#funnel"/></svg></b><b class="pt p5 d"><svg><use href="#eps"/></svg></b><b class="ar g p6"></b><b class="pt p7"><svg><use href="#expd"/></svg></b><b class="pt p8"><svg><use href="#coll"/></svg></b><b class="pt p8"><svg><use href="#rmv"/></svg></b>
    </div>
    <div class="treewrap">
      <ul class="tree">
        <li class="row off"><i class="tw"></i><i class="cb"></i><span class="ico"><svg class="s8c"><circle cx="4" cy="4" r="3.500" fill="#6a8f5f" stroke="#445"/></svg></span><span class="nm">Pasted</span><svg class="memo"><use href="#memo"/></svg></li>
        <li class="row off"><i class="tw r"></i><i class="cb"></i><span class="ico"><svg class="s13"><use href="#ras"/></svg></span><span class="nm">20160121142135_1256886783</span></li>
        <li class="row off"><i class="tw r"></i><i class="cb"></i><span class="ico"><svg class="s14"><use href="#pts"/></svg></span><span class="nm">darien_puntos_interes</span></li>
        <li class="row sel"><i class="tw o"></i><i class="cb x"></i><span class="ico"><svg class="s13"><use href="#rass"/></svg></span><span class="nm">Google Maps</span></li>
        <li class="row on"><i class="tw"></i><i class="cb x"></i><span class="ico"><i class="swatch blue"></i></span><span class="nm">riosambu2</span></li>
        <li class="row off"><i class="tw"></i><i class="cb"></i><span class="ico"><i class="swatch dash"></i></span><span class="nm">provincias_panama</span></li>
        <li class="row off"><i class="tw"></i><i class="cb"></i><span class="ico"><svg class="s13"><use href="#ras"/></svg></span><span class="nm">sentinel_cloudless</span></li>
        <li class="row off"><i class="tw r"></i><i class="cb"></i><span class="ico"><svg class="s14"><use href="#pts"/></svg></span><span class="nm">bosques_2_ubicacion</span></li>
        <li class="row off"><i class="tw r"></i><i class="cb"></i><span class="ico"><svg class="s14"><use href="#pts"/></svg></span><span class="nm">lugarpob_point</span></li>
        <li class="row on"><i class="tw"></i><i class="cb x"></i><span class="ico"><svg class="s8c"><path d="M1 1l6 6M7 1l-6 6" stroke="#333" stroke-width="1.800"/></svg></span><span class="nm">cotas</span></li>
        <li class="row off"><i class="tw"></i><i class="cb"></i><span class="ico"><i class="swatch pink"></i></span><span class="nm">cuencas_darien_lineas</span></li>
        <li class="row on"><i class="tw"></i><i class="cb x"></i><span class="ico"><svg class="s13"><use href="#ras"/></svg></span><span class="nm">4640_IV_SW_ReZ_17</span></li>
        <li class="row off"><i class="tw r"></i><i class="cb"></i><span class="ico"><svg class="s18"><use href="#penl"/></svg></span><span class="nm">Hidrografia</span></li>
        <li class="row off"><i class="tw r"></i><i class="cb"></i><span class="ico"><svg class="s18"><use href="#lin"/></svg></span><span class="nm">Hidrografia copy</span></li>
        <li class="row off"><i class="tw"></i><i class="cb"></i><span class="ico"><svg class="s13"><use href="#ras"/></svg></span><span class="nm">ACD_microcuencas_crop_modified</span></li>
        <li class="row on nochk"><i class="tw"></i><span class="ico2"><svg class="s12"><use href="#img"/></svg></span><span class="nm">contour</span><svg class="warnic"><use href="#warn"/></svg></li>
        <li class="row off"><i class="tw"></i><i class="cb"></i><span class="ico"><i class="swatch line"></i></span><span class="nm">rios_pto_indio</span></li>
        <li class="row off"><i class="tw r"></i><i class="cb"></i><span class="ico"><svg class="s18"><use href="#lin"/></svg></span><span class="nm">Red_Vial</span></li>
        <li class="row grp"><i class="tw r"></i><i class="cb x"></i><span class="ico"><svg class="s16"><use href="#groupg"/></svg></span><span class="nm">Pijibasal</span></li>
        <li class="row grp"><i class="tw o"></i><i class="cb x"></i><span class="ico"><svg class="s16"><use href="#groupg"/></svg></span><span class="nm">Filo del Tallo</span></li>
        <li class="row off ind"><i class="tw"></i><i class="cb"></i><span class="ico"><i class="swatch aqua"></i></span><span class="nm">reserva_adafelix</span></li>
      </ul>
      <div class="vscroll lsc"><i class="up"></i><i class="thumb"></i><i class="dn"></i></div>
    </div>
  </section>

  <div class="canvas">
    <svg class="mapsvg" viewBox="329 151 901 549" preserveAspectRatio="none">
      <defs>
        <path id="road" d="M592 146C606 163 619 179 630 195L681 270L723 334L771 408L803 462L823 497L847 541C865 575 885 618 900 648L936 706"/>
        <path id="t1" d="M625 189C640 212 665 248 690 282"/>
        <path id="t2" d="M846 542C870 588 890 628 912 668"/>
      </defs>
      <use href="#road" fill="none" stroke="#fbe3a0" stroke-width="9"/>
      <use href="#road" fill="none" stroke="#feea9f" stroke-width="6.500"/>
      <text class="rdtxt"><textPath href="#t1">Interamericana</textPath></text>
      <text class="rdtxt"><textPath href="#t2">Pan-American Hwy</textPath></text>
      <path d="M765 404h12q1.500 0 1.500 1.500v9l-7.500 3.500-7.500-3.500v-9q0-1.500 1.500-1.500z" fill="#fff" stroke="#999" stroke-width="1.200"/>
      <text x="771" y="413.500" class="shtxt">1</text>
    </svg>
  </div>

  <section class="panel right">
    <div class="phead rh"><span>Browser (2)</span><span class="dock rd"><svg class="dk"><use href="#float"/></svg><svg class="dk"><use href="#close"/></svg></span></div>
    <div class="ptools rt">
      <b class="pt r1"><svg><use href="#addgr"/></svg></b><b class="pt r2"><svg><use href="#refresh"/></svg></b><b class="pt r2"><svg><use href="#funnel"/></svg></b><b class="pt r3"><svg><use href="#coll"/></svg></b><b class="more w14">»</b>
    </div>
    <div class="browser">
      <div class="btree">
        <ul class="blist">
          <li><svg class="s13"><use href="#ras"/></svg><span>Esri Standard</span></li>
          <li><svg class="s13"><use href="#ras"/></svg><span>Esri Terrain</span></li>
          <li><svg class="s13"><use href="#ras"/></svg><span>Esri Topo World</span></li>
          <li><svg class="s13"><use href="#ras"/></svg><span>Esri Transportation</span></li>
          <li class="bsel"><svg class="s13"><use href="#rass"/></svg><span>Google Maps</span></li>
          <li><svg class="s13"><use href="#ras"/></svg><span>Google Satellite</span></li>
          <li><svg class="s13"><use href="#ras"/></svg><span>Google Satellite Hybrid</span></li>
          <li><svg class="s13"><use href="#ras"/></svg><span>Google Terrain</span></li>
          <li><svg class="s13"><use href="#ras"/></svg><span>Google Terrain Hybrid</span></li>
          <li><svg class="s13"><use href="#ras"/></svg><span>Mapeo tierras</span></li>
          <li><svg class="s13"><use href="#ras"/></svg><span>Open Weather Map</span></li>
          <li><svg class="s13"><use href="#ras"/></svg><span>Open Weather Rain</span></li>
          <li><svg class="s13"><use href="#ras"/></svg><span>Open Weather Wind</span></li>
          <li><svg class="s13"><use href="#ras"/></svg><span>OpenStreetMap</span></li>
          <li><svg class="s13"><use href="#ras"/></svg><span>OpenStreetMap DE</span></li>
          <li><svg class="s13"><use href="#ras"/></svg><span>OpenStreetMap HOT</span></li>
          <li><svg class="s13"><use href="#ras"/></svg><span>OpenStreetMap Topo</span></li>
          <li><svg class="s13"><use href="#ras"/></svg><span>Pijibasal</span></li>
          <li><svg class="s13"><use href="#ras"/></svg><span>Stamen Terrain</span></li>
          <li><svg class="s13"><use href="#ras"/></svg><span>Stamen Toner</span></li>
          <li><svg class="s13"><use href="#ras"/></svg><span>Stamen Toner Lite</span></li>
          <li><svg class="s13"><use href="#ras"/></svg><span>Stamen Watercolor</span></li>
          <li><svg class="s13"><use href="#ras"/></svg><span>Strava All</span></li>
        </ul>
        <div class="hscroll"><i class="lft"></i><i class="hthumb"></i><i class="rgt"></i></div>
      </div>
      <div class="vscroll rsc"><i class="up"></i><i class="thumb"></i><i class="dn"></i></div>
    </div>
  </section>
</main>

<footer class="status">
  <label class="locator"><svg class="s14"><use href="#search"/></svg><span>Type to locate (Ctrl+K)</span></label>
  <span class="lab coord">Coordinate</span>
  <span class="field cfield">185301,930406</span>
  <svg class="nogeo"><use href="#nogeo"/></svg>
  <span class="lab scale">Scale</span>
  <span class="combo"><span>1:8900</span><i class="cdrop"></i></span>
  <svg class="lock"><use href="#lock"/></svg>
  <span class="lab magn">Magnifier</span>
  <span class="spin sp1"><span>100%</span><i class="sbtn"></i></span>
  <span class="lab rot">Rotation</span>
  <span class="spin sp2"><span>0.0 °</span><i class="sbtn"></i></span>
  <i class="cb x st"></i>
  <span class="lab rend">Render</span>
  <svg class="globe"><use href="#globe"/></svg>
  <span class="lab epsg">EPSG:32618</span>
  <svg class="msg"><use href="#msg"/></svg>
</footer>

<div class="taskbar">
  <svg class="tk mint"><use href="#mint"/></svg>
  <svg class="tk q1"><use href="#fox"/></svg>
  <svg class="tk q2"><use href="#tool"/></svg>
  <svg class="tk q2"><use href="#term"/></svg>
  <svg class="tk q2"><use href="#folder"/></svg>
  <div class="tasks">
    <span class="task"><svg class="ti"><use href="#doc"/></svg>howto_...</span>
    <span class="task"><svg class="ti"><use href="#fox"/></svg>Dónde ...</span>
    <span class="task"><svg class="ti"><use href="#term"/></svg>mir@sil...</span>
    <span class="task cur"><svg class="ti"><use href="#qgis"/></svg>*darien...</span>
    <span class="task"><svg class="ti"><use href="#kee"/></svg>mirpw.k...</span>
    <span class="task"><svg class="ti"><use href="#mail"/></svg>Inbox - ...</span>
    <span class="task"><svg class="ti"><use href="#lp"/></svg>LPWAN...</span>
    <span class="task"><svg class="ti"><use href="#folder"/></svg>tommyg...</span>
    <span class="task"><svg class="ti"><use href="#pic"/></svg>portuch...</span>
  </div>
  <div class="tray">
    <i class="blackbox"></i>
    <svg class="t16 a1"><use href="#shield"/></svg>
    <svg class="t16 a2"><use href="#bt"/></svg>
    <svg class="t16 a3"><use href="#dbx"/></svg>
    <svg class="t16 a4"><use href="#bulb"/></svg>
    <span class="es">ES</span>
    <svg class="t16 a5"><use href="#user"/></svg>
    <svg class="t16 a6"><use href="#wifi"/></svg>
    <svg class="t16 a7"><use href="#batt"/></svg>
    <span class="clock">21:11</span>
    <svg class="t16 a8"><use href="#vol"/></svg>
  </div>
</div>
</div>
</body>
</html>
```
FILE: styles.css
```css
*{box-sizing:border-box}
html,body{margin:0;padding:0;height:100%;overflow:hidden}
body{font-family:"Noto Sans","Open Sans",sans-serif;font-size:12px;color:#222;background:#d6d6d6}
.defs{position:absolute}
.sv{font-family:"Liberation Sans",sans-serif}
i,b,em{font-style:normal;font-weight:400;display:block}
ul{list-style:none;margin:0;padding:0}
.app{width:1366px;height:768px;display:flex;flex-direction:column}

.titlebar{height:27px;background:#dadada;display:flex;align-items:center;justify-content:center;position:relative;flex:none}
.title{font-size:13.500px;color:#5a5a5a;font-weight:600;margin-left:1px}
.wbtns{position:absolute;left:1288px;top:6px;display:flex;align-items:center}
.wmin{width:6px;height:2px;background:#777;margin-right:24px}
.wmax{width:6px;height:6px;background:linear-gradient(135deg,#888 40%,#ddd 40% 60%,#888 60%);margin-right:20px}
.wclose{width:14px;height:14px;border-radius:50%;background:#8cb56a;position:relative}
.wclose::before,.wclose::after{content:"";position:absolute;left:3px;top:6px;width:8px;height:2px;background:#fff;transform:rotate(45deg)}
.wclose::after{transform:rotate(-45deg)}

.menubar{height:28px;flex:none;display:flex;align-items:center;background:linear-gradient(#dbdbdb,#d6d6d6);padding-left:13px;gap:18.700px;font-size:12px;color:#1e1e1e}
u{text-underline-offset:1px}

.tb{display:flex;align-items:center;flex:none;background:linear-gradient(#dadada,#c6c6c6);border-bottom:2px solid #939393}
.tb1{height:31px;padding-left:5px}
.tb2{height:32px;padding-left:5px;width:1352px}
.tb3{height:32px;padding:1px 0 0 5px}
.grip{width:2px;height:22px;margin:0 4px 0 7px;flex:none;background:repeating-linear-gradient(#6f6f6f 0 2px,transparent 2px 5px)}
.grip.first{margin:0 4px 0 0}
.grip.s9{margin:0 3px 0 9px}
.grip.s8{margin:0 4px 0 8px}
.grip.s7{margin:0 3px 0 7px}
.grip.s1{margin:0 3px 0 1px}
.bt{width:28px;height:27px;display:flex;align-items:center;justify-content:center;flex:none}
.bt svg{width:20px;height:20px;flex:none}
.bt.on{background:#adadad;border:1px solid #8a8a8a;border-radius:3px;box-shadow:inset 0 0 2px #888}
.bt.wide{width:34px;justify-content:flex-start;padding-left:2px}
.bt.l1{width:29px}
.d svg{opacity:.3;filter:grayscale(1)}
.f svg{opacity:.55}
.mini{width:0;height:0;border:4px solid transparent;border-top:5px solid #111;border-bottom:0;margin-left:1px;margin-top:4px;flex:none}
.ar{width:20px;height:27px;flex:none;position:relative}
.ar::after{content:"";position:absolute;left:6px;top:11px;border:4px solid transparent;border-top:5px solid #111;border-bottom:0}
.ar.g::after{border-top-color:#8e8e8e}
.gap10{width:10px;flex:none}
.more{font-size:15px;font-weight:700;color:#111;text-align:center;flex:none;line-height:27px}
.w24{width:24px}
.w14{width:14px}

.main{height:550px;display:flex;flex:none;background:#d6d6d6}
.panel{display:flex;flex-direction:column;flex:none}
.left{width:322px}
.right{width:136px;margin-left:1px}
.phead{height:24px;flex:none;display:flex;align-items:center;justify-content:space-between;padding:0 3px 0 2px;font-size:13px;color:#333}
.rh{padding:0 2px 0 8px}
.dock{display:flex;gap:5px}
.dk{width:12px;height:12px}
.rd{margin-right:0}
.ptools{height:33px;flex:none;display:flex;align-items:center}
.pt{display:flex;align-items:center;flex:none}
.pt svg{width:17px;height:17px;flex:none}
.lt{padding-left:8px}
.p1{width:28px}.p2{width:25.500px}.p3{width:36px}
.p3 svg{width:20px;margin-left:-1px}
.p3 .mini{margin-left:0;margin-top:6px}
.p4{width:29.500px}.p5{width:21px}.p6{width:26.500px}.p7{width:28px}.p8{width:27.500px}
.rt{padding-left:13px}
.r1{width:29px}.r2{width:28px}.r3{width:22px}
.treewrap{flex:1;min-height:0;display:flex;width:322px;border:1px solid #9a9a9a;border-bottom:0;border-right:0;overflow:hidden;background:#f4f4f4}
.tree{width:307px;flex:none;overflow:hidden}
.row{height:24px;display:flex;align-items:center;position:relative;font-size:12px;white-space:nowrap}
.tw{width:24px;height:24px;flex:none;position:relative}
.tw.r::after{content:"";position:absolute;left:10px;top:7px;border:5px solid transparent;border-left:6px solid #111;border-right:0}
.tw.o::after{content:"";position:absolute;left:7px;top:9px;border:5px solid transparent;border-top:6px solid #111;border-bottom:0}
.cb{width:14px;height:14px;border:1px solid #999;border-radius:3px;background:#f6f6f6;flex:none;margin-left:2px;position:relative}
.cb.x{background:#b5504d;border:1px solid #7d7d7d;margin-left:1px;margin-right:1px}
.cb.x::before,.cb.x::after{content:"";position:absolute;left:2px;top:5px;width:8px;height:2.500px;background:#fff;transform:rotate(45deg)}
.cb.x::after{transform:rotate(-45deg)}
.ico{width:31px;height:16px;display:flex;align-items:center;justify-content:center;flex:none;padding-left:5px}
.ico2{width:21px;display:flex;justify-content:flex-start;flex:none;padding-left:2px}
.s12{width:12px;height:12px;flex:none}
.s13{width:13px;height:13px;flex:none}
.s14{width:14px;height:14px;flex:none}
.s16{width:16px;height:16px;flex:none}
.s18{width:18px;height:14px;flex:none}
.s8c{width:8px;height:8px;flex:none}
.nm{flex:none}
.off .nm{font-style:italic;font-weight:700;color:#8a8a8a}
.on .nm{font-weight:700;color:#1a1a1a}
.grp .nm{color:#222}
.sel{background:linear-gradient(#ba5c57,#a84c49);box-shadow:inset 0 0 0 1px #8a8a8a}
.sel .nm{color:#fff;font-weight:700;text-decoration:underline;text-underline-offset:2px}
.nochk{height:21px}
.ind{padding-left:20px}
.swatch{display:block;flex:none}
.blue{width:16px;height:16px;background:#08529a;border:1px solid #444}
.dash{width:16px;height:16px;border:2px dashed #ff2be0}
.pink{width:11px;height:7px;background:#ff00e6}
.line{width:16px;height:3px;background:#0a16f0}
.aqua{width:16px;height:16px;border:3px solid #8ff0cf;background:#f4f4f4}
.memo{position:absolute;right:3px;top:5px;width:18px;height:14px}
.warnic{position:absolute;right:3px;top:2px;width:16px;height:16px}
.vscroll{width:14px;flex:none;background:#e2e2e2;position:relative;border-left:1px solid #d0d0d0}
.up,.dn{position:absolute;left:3px;border:4px solid transparent}
.up{top:3px;border-bottom:5px solid #333;border-top:0}
.dn{bottom:4px;border-top:5px solid #222;border-bottom:0}
.thumb{position:absolute;left:1px;width:10px;background:#efefef;border:1px solid #a8a8a8;border-radius:5px}
.lsc .thumb{top:15px;height:103px}
.rsc .thumb{top:190px;height:183px}

.canvas{width:901px;flex:none;margin-left:7px;border-top:1px solid #8e8e8e;height:550px;background:#f1f1f1;overflow:hidden}
.mapsvg{display:block;width:901px;height:549px}
.rdtxt{font-family:"Liberation Sans",sans-serif;font-size:13.500px;fill:#7b4a1e;stroke:#fff3c9;stroke-width:.5px;paint-order:stroke}
.shtxt{font-family:"Liberation Sans",sans-serif;font-size:8px;fill:#666;text-anchor:middle}

.browser{flex:1;min-height:0;display:flex;margin-left:6px;border-top:1px solid #9a9a9a;border-left:1px solid #9a9a9a;background:#f4f4f4;overflow:hidden}
.btree{width:114px;flex:none;display:flex;flex-direction:column;overflow:hidden}
.blist{flex:1;min-height:0;overflow:hidden}
.blist li{height:21px;display:flex;align-items:center;padding-left:45px;white-space:nowrap;color:#2a2a2a;overflow:hidden;font-size:12px}
.blist svg{margin-right:7px}
.bsel{background:linear-gradient(#ba5c57,#a84c49);box-shadow:inset 0 0 0 1px #8a8a8a}
.blist li.bsel{color:#f3e3e3}
.hscroll{height:13px;flex:none;background:#e2e2e2;position:relative}
.lft,.rgt{position:absolute;top:3px;border:4px solid transparent}
.lft{left:2px;border-right:5px solid #333;border-left:0}
.rgt{right:3px;border-left:5px solid #333;border-right:0}
.hthumb{position:absolute;left:15px;top:2px;width:35px;height:9px;background:#efefef;border:1px solid #a8a8a8;border-radius:5px}

.status{height:40px;flex:none;display:flex;align-items:center;background:#d6d6d6;font-size:9.200px;color:#444;padding-left:5px}
.locator{width:219px;height:24px;background:#f1f1f1;border:1px solid #a5a5a5;border-radius:3px;display:flex;align-items:center;gap:7px;padding-left:7px;font-size:12px;color:#8a8a8a;flex:none}
.lab{flex:none}
.coord{margin-left:312px;width:46px}
.field{width:93px;height:22px;background:#f4f4f4;border:1px solid #a5a5a5;border-radius:3px;margin-left:5px;text-align:center;line-height:20px;flex:none;font-size:9.400px;color:#333}
.nogeo{width:24px;height:24px;margin-left:3px;flex:none}
.scale{margin-left:13px;width:22px}
.combo{width:98px;height:30px;margin-left:5px;background:#f4f4f4;border:1px solid #a5a5a5;border-radius:3px;display:flex;align-items:center;justify-content:space-between;padding-left:4px;flex:none;font-size:9.400px;color:#333}
.cdrop{width:22px;height:28px;background:linear-gradient(#e8e8e8,#cdcdcd);border-left:1px solid #a5a5a5;position:relative}
.cdrop::after{content:"";position:absolute;left:6px;top:11px;border:5px solid transparent;border-top:6px solid #222;border-bottom:0}
.lock{width:16px;height:22px;margin-left:14px;flex:none}
.magn{margin-left:10px;width:41px}
.spin{height:24px;background:#f4f4f4;border:1px solid #a5a5a5;border-radius:3px;display:flex;align-items:center;justify-content:space-between;padding-left:4px;flex:none;font-size:9.400px;color:#333}
.sp1{width:90px;margin-left:5px}
.sp2{width:86px;margin-left:10px}
.sbtn{width:12px;height:22px;background:#e6e6e6;border-left:1px solid #bbb;position:relative}
.sbtn::before{content:"";position:absolute;left:2px;top:4px;border:3px solid transparent;border-bottom:4px solid #666;border-top:0}
.sbtn::after{content:"";position:absolute;left:2px;bottom:4px;border:3px solid transparent;border-top:4px solid #666;border-bottom:0}
.rot{margin-left:10px;width:36px}
.cb.x.st{margin-left:10px;margin-right:0}
.rend{margin-left:9px;width:30px}
.globe{width:22px;height:22px;margin-left:17px;flex:none}
.epsg{margin-left:6px;width:50px}
.msg{width:27px;height:27px;margin-left:15px;flex:none}

.taskbar{height:28px;flex:none;background:#2d2d2d;display:flex;align-items:center;color:#cfcfcf;font-size:12px}
.tk{width:20px;height:20px;flex:none}
.mint{margin-left:4px}
.q1{margin-left:21px}
.q2{margin-left:8px}
.tasks{display:flex;margin-left:21px}
.task{width:100.300px;height:28px;display:flex;align-items:center;gap:3px;padding-left:8px;letter-spacing:.6px;white-space:nowrap;flex:none;color:#c8c8c8;font-weight:500}
.ti{width:15px;height:15px;flex:none}
.cur{border-bottom:2px solid #8ba86a;color:#f0f0f0;font-weight:600;padding-top:2px}
.tray{display:flex;align-items:center;flex:none;margin-left:17px}
.blackbox{width:20px;height:20px;background:#000;flex:none}
.t16{width:16px;height:18px;flex:none}
.a1{margin-left:8px}.a2{margin-left:9px}.a3{margin-left:11px}.a4{margin-left:9px}
.es{margin-left:8px;width:16px;font-size:12px;font-weight:600;color:#ccc}
.a5{margin-left:6px}.a6{margin-left:9px}.a7{margin-left:7px}
.clock{margin-left:8px;width:26px;font-size:11.500px;color:#cfcfcf;font-weight:500;letter-spacing:-.3px}
.a8{margin-left:6px}
```
